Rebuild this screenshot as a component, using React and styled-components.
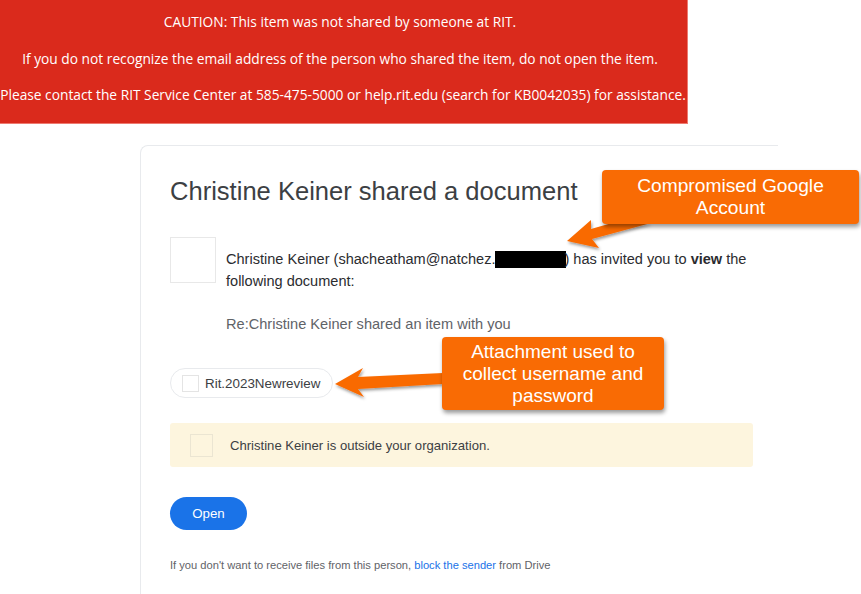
import styled, { createGlobalStyle } from "styled-components"

const GlobalStyle = createGlobalStyle`
    html, body {
        margin: 0;
        padding: 0;
        background: #fff;
    }
    body {
        font-family: "Liberation Sans", Arial, sans-serif;
    }
`

const App = () => {
  return (
    <Page>
      <GlobalStyle />
      <Caution>
        <CautionLine>CAUTION: This item was not shared by someone at RIT.</CautionLine>
        <CautionLine>If you do not recognize the email address of the person who shared the item, do not open the item.</CautionLine>
        <CautionLine $wide>Please contact the RIT Service Center at 585-475-5000 or help.rit.edu (search for KB0042035) for assistance.</CautionLine>
      </Caution>

      <Card>
        <Title>Christine Keiner shared a document</Title>
        <Invite>
          <Avatar />
          <InviteText>
            Christine Keiner (shacheatham@natchez.<Redacted />) has invited you to <b>view</b> the following document:
          </InviteText>
        </Invite>
        <Subject>Re:Christine Keiner shared an item with you</Subject>
        <Chip>
          <ChipIcon />
          <ChipName>Rit.2023Newreview</ChipName>
        </Chip>
        <Notice>
          <NoticeIcon />
          <span>Christine Keiner is outside your organization.</span>
        </Notice>
        <OpenButton>Open</OpenButton>
        <Footer>
          If you don't want to receive files from this person, <FooterLink>block the sender</FooterLink> from Drive
        </Footer>
      </Card>

      <Arrows width="861" height="594" viewBox="0 0 861 594">
        <defs>
          <filter id="arrowShadow" x="-20%" y="-20%" width="140%" height="160%">
            <feDropShadow dx="1" dy="2" stdDeviation="1.5" floodColor="#000" floodOpacity="0.4" />
          </filter>
        </defs>
        <g fill="#f96b04" filter="url(#arrowShadow)">
          <polygon points="612,223 591,229 591,220 567,241 599,248 592,239 651,223" />
          <polygon points="443,373 358,377 363,368 335,384 364,397 358,389 443,384" />
        </g>
      </Arrows>

      <Callout $left={602} $top={170} $width={257} $height={54} $size={19.2}>
        Compromised Google Account
      </Callout>
      <Callout $left={442} $top={337} $width={222} $height={73} $size={19}>
        Attachment used to collect username and password
      </Callout>
    </Page>
  )
}

export default App

const Page = styled.div`
    position: relative;
    width: 861px;
    height: 594px;
    overflow: hidden;
`

const Caution = styled.div`
    width: 688px;
    height: 124px;
    background: #da2a1c;
    color: #fff;
    font-family: "Open Sans", "Noto Sans", sans-serif;
    font-size: 13.76px;
    display: flex;
    flex-direction: column;
    align-items: center;
    gap: 18px;
    padding: 13px 7px 0 0;
    box-sizing: border-box;
    border-right: 1px solid #ee7a70;
    border-bottom: 1px solid #ee7a70;
`

const CautionLine = styled.div`
    line-height: 18.5px;
    white-space: nowrap;
    margin-right: ${p => (p.$wide ? "-6px" : "0")};
`

const Card = styled.div`
    width: 638px;
    height: 449px;
    margin: 21px 0 0 140px;
    padding: 29px 25px 0 29px;
    box-sizing: border-box;
    border-top: 1px solid #e8eaed;
    border-left: 1px solid #e8eaed;
    border-top-left-radius: 8px;
`

const Title = styled.h1`
    margin: 0;
    font-size: 25.55px;
    font-weight: 400;
    line-height: 32px;
    color: #3c4043;
`

const Invite = styled.div`
    display: flex;
    gap: 10px;
    margin-top: 30px;
`

const Avatar = styled.div`
    flex: none;
    width: 46px;
    height: 46px;
    box-sizing: border-box;
    border: 1px solid #e8e8e8;
`

const InviteText = styled.p`
    margin: 11px 0 0;
    font-size: 14.55px;
    line-height: 22px;
    color: #2b2c2f;
    b {
        font-weight: 700;
    }
`

const Redacted = styled.span`
    display: inline-block;
    width: 71px;
    height: 17px;
    margin-right: -2px;
    background: #000;
    vertical-align: -4px;
`

const Subject = styled.div`
    margin: 21px 0 0 56px;
    font-size: 14.6px;
    line-height: 22px;
    color: #5f6368;
`

const Chip = styled.div`
    display: inline-flex;
    align-items: center;
    gap: 6px;
    width: 163px;
    height: 30px;
    margin-top: 33px;
    padding-left: 11px;
    box-sizing: border-box;
    border: 1px solid #e8eaed;
    border-radius: 15px;
`

const ChipIcon = styled.span`
    flex: none;
    width: 17px;
    height: 17px;
    box-sizing: border-box;
    border: 1px solid #e4e4e4;
`

const ChipName = styled.span`
    font-size: 13.4px;
    color: #3c4043;
    white-space: nowrap;
`

const Notice = styled.div`
    display: flex;
    align-items: center;
    gap: 17px;
    width: 583px;
    height: 44px;
    margin-top: 25px;
    padding-left: 20px;
    box-sizing: border-box;
    background: #fdf5de;
    border-radius: 3px;
    font-size: 13.1px;
    color: #3c4043;
`

const NoticeIcon = styled.span`
    flex: none;
    width: 23px;
    height: 23px;
    box-sizing: border-box;
    border: 1px solid #ebe5d2;
`

const OpenButton = styled.button`
    display: block;
    width: 77px;
    height: 33px;
    margin-top: 30px;
    padding: 0;
    border: none;
    border-radius: 17px;
    background: #1a73e8;
    color: #fff;
    font-family: "Liberation Sans", Arial, sans-serif;
    font-size: 13.3px;
`

const Footer = styled.p`
    margin: 28px 0 0;
    font-size: 11.15px;
    line-height: 14px;
    color: #5f6368;
`

const FooterLink = styled.span`
    color: #1a73e8;
`

const Arrows = styled.svg`
    position: absolute;
    left: 0;
    top: 0;
    pointer-events: none;
`

const Callout = styled.div`
    position: absolute;
    left: ${p => p.$left}px;
    top: ${p => p.$top}px;
    width: ${p => p.$width}px;
    height: ${p => p.$height}px;
    display: flex;
    align-items: center;
    justify-content: center;
    padding: 0 12px;
    box-sizing: border-box;
    background: #f96b04;
    border-radius: 4px;
    box-shadow: 1px 3px 4px rgba(0, 0, 0, 0.4);
    color: #fff;
    font-size: ${p => p.$size}px;
    line-height: 22px;
    text-align: center;
`
